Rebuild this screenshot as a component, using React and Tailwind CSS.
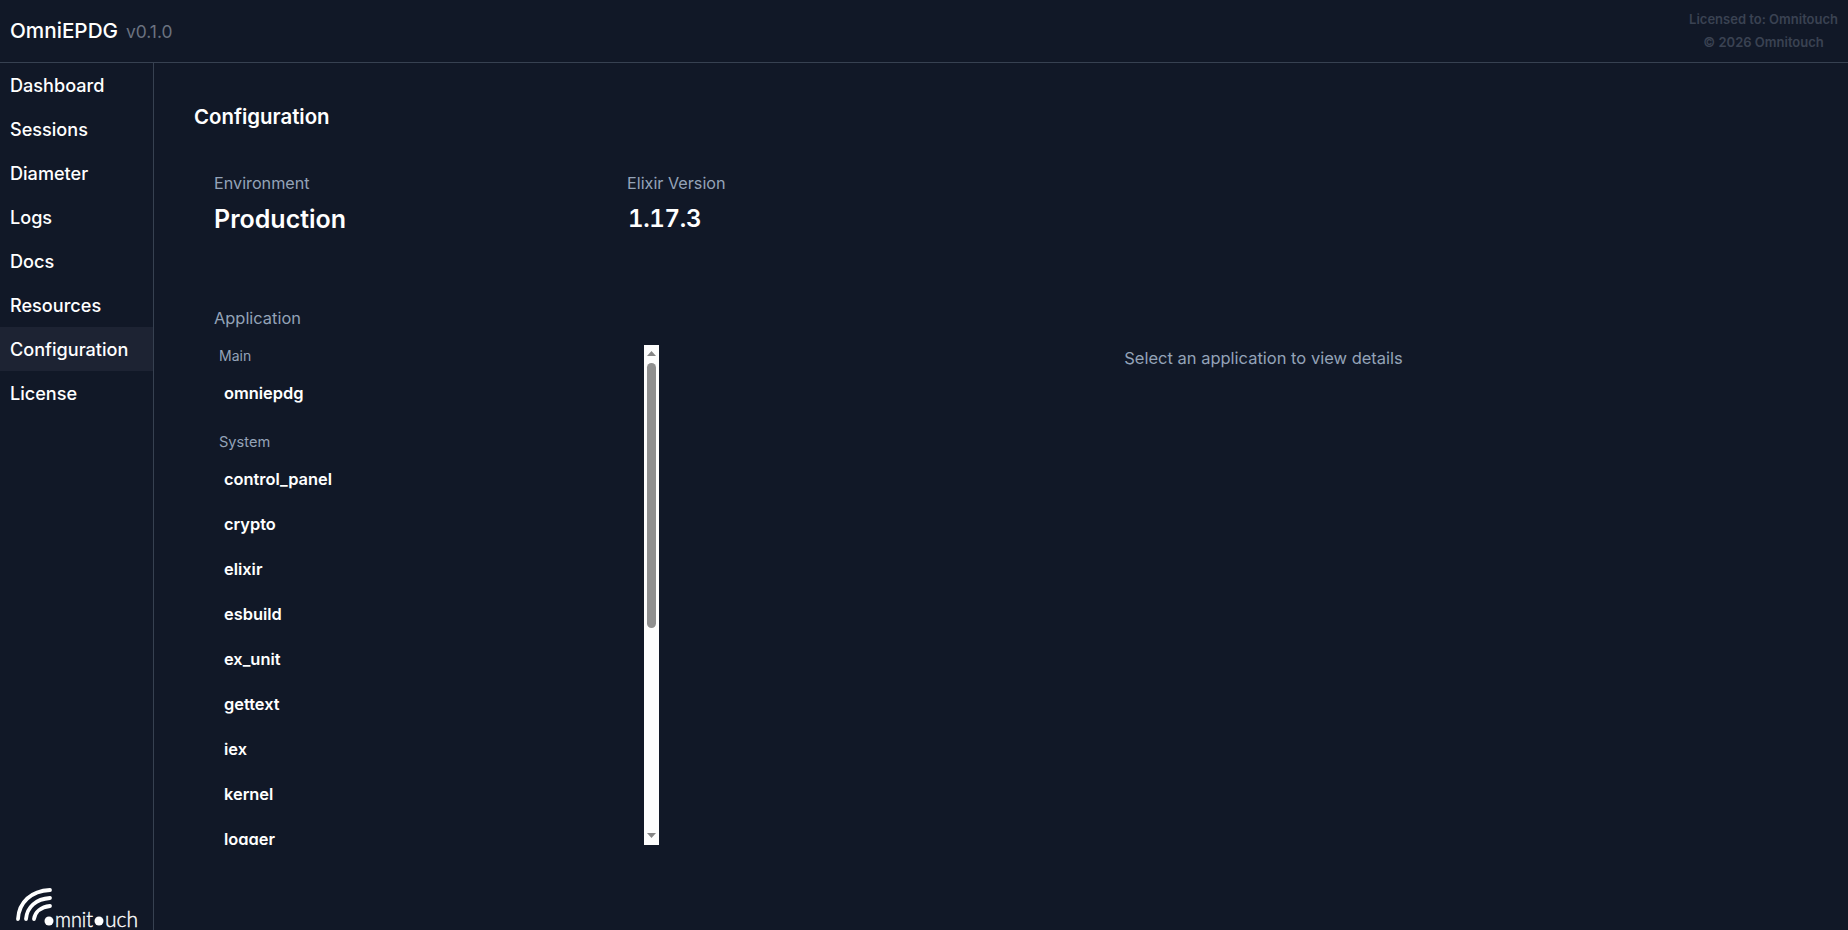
import React from 'react';

const navItems = ['Dashboard', 'Sessions', 'Diameter', 'Logs', 'Docs', 'Resources', 'Configuration', 'License'];
const systemApps = ['control_panel', 'crypto', 'elixir', 'esbuild', 'ex_unit', 'gettext', 'iex', 'kernel', 'logger', 'mix', 'phoenix', 'plug', 'public_key', 'ssl', 'stdlib', 'telemetry'];

function Logo() {
  return (
    <svg width="130" height="50" viewBox="0 0 130 50" fill="none" className="block">
      <g stroke="#ffffff" strokeWidth="3.8" strokeLinecap="round">
        <path d="M8 39 C9 22 21 11 40 10" />
        <path d="M16 39 C17 27 26 19 40 18" />
        <path d="M24 39 C25 32 31 27 40 26" />
      </g>
      <circle cx="39" cy="41" r="4.5" fill="#ffffff" />
      <text x="45" y="47" fill="#ffffff" stroke="#ffffff" strokeWidth="0.4" fontFamily="'Lato', sans-serif" fontSize="21" fontWeight="300" textLength="38" lengthAdjust="spacingAndGlyphs">mnit</text>
      <circle cx="89" cy="41" r="4.5" fill="#ffffff" />
      <text x="95" y="47" fill="#ffffff" stroke="#ffffff" strokeWidth="0.4" fontFamily="'Lato', sans-serif" fontSize="22" fontWeight="300" textLength="33" lengthAdjust="spacingAndGlyphs">uch</text>
    </svg>
  );
}

// headless chrome hides the native bar, so it is drawn over the list
function ScrollBar() {
  return (
    <div className="absolute right-0 top-0 bottom-0 w-[15px] bg-[#fdfdfd]">
      <svg width="9" height="5" viewBox="0 0 9 5" className="absolute left-[3px] top-[6px]">
        <path d="M4.5 0 L9 5 L0 5 Z" fill="#858585" />
      </svg>
      <div className="absolute left-[3px] top-[18px] w-[9px] h-[265px] rounded-full bg-[#8f8f8f]" />
      <svg width="9" height="5" viewBox="0 0 9 5" className="absolute left-[3px] bottom-[7px]">
        <path d="M0 0 L9 0 L4.5 5 Z" fill="#858585" />
      </svg>
    </div>
  );
}

export default function App() {
  return (
    <div className="h-[930px] flex flex-col overflow-hidden bg-[#111827] text-white font-['Inter',sans-serif]">
      {/* Header */}
      <header className="h-[63px] shrink-0 border-b border-[#374151] flex items-center justify-between px-[10px]">
        <div className="flex items-baseline gap-2">
          <span className="text-[20.7px] font-medium">OmniEPDG</span>
          <span className="text-[17.4px] text-[#6b7280]">v0.1.0</span>
        </div>
        <div className="text-center text-[13px] leading-[23px] font-semibold text-[#3a4252] -mt-px">
          <div>Licensed to: Omnitouch</div>
          <div>© 2026 Omnitouch</div>
        </div>
      </header>

      <div className="flex flex-1 min-h-0">
        {/* Sidebar */}
        <aside className="w-[154px] shrink-0 border-r border-[#374151] flex flex-col justify-between">
          <nav className="flex flex-col">
            {navItems.map((item) => (
              <a
                key={item}
                href="#"
                className={`h-11 flex items-center px-[10px] pt-0.5 text-[18.1px] font-medium ${item === 'Configuration' ? 'bg-[#1d2333]' : ''}`}
              >
                {item}
              </a>
            ))}
          </nav>
          <div className="pl-[10px]">
            <Logo />
          </div>
        </aside>

        {/* Main */}
        <main className="flex-1 min-w-0 pl-10 pt-10">
          <h1 className="text-[20.4px] font-semibold leading-7">Configuration</h1>

          <div className="grid grid-cols-[413px_1fr] pl-5 mt-10">
            <div>
              <div className="text-[16.2px] text-[#94a3b8] leading-6">Environment</div>
              <div className="text-[25px] font-semibold leading-8 mt-2">Production</div>
            </div>
            <div>
              <div className="text-[16.2px] text-[#94a3b8] leading-6">Elixir Version</div>
              <div className="text-2xl font-semibold leading-8 mt-2 tabular-nums tracking-[-0.3px] pl-px">1.17.3</div>
            </div>
          </div>

          <div className="flex pl-5 mt-[71px]">
            <div className="w-[445px] shrink-0">
              <div className="text-[16.4px] text-[#94a3b8] leading-6">Application</div>
              <div className="relative h-[500px] overflow-hidden mt-[15px]">
                <div className="pl-[5px] pt-px text-sm text-[#94a3b8] leading-5">Main</div>
                <div className="pl-2.5 mt-[5px] text-[16.4px] font-semibold leading-6 py-2.5">omniepdg</div>
                <div className="pl-[5px] pt-px text-[14.6px] text-[#94a3b8] leading-5 mt-4">System</div>
                <div className="mt-[5px] flex flex-col gap-[1px]">
                  {systemApps.map((app) => (
                    <div key={app} className="pl-2.5 text-[16.4px] font-semibold leading-6 py-2.5">{app}</div>
                  ))}
                </div>
                <ScrollBar />
              </div>
            </div>
            <div className="flex-1 min-w-0 ml-5 pt-10 text-center">
              <p className="text-[#94a3b8] text-[16.5px] leading-6">Select an application to view details</p>
            </div>
          </div>
        </main>
      </div>
    </div>
  );
}
